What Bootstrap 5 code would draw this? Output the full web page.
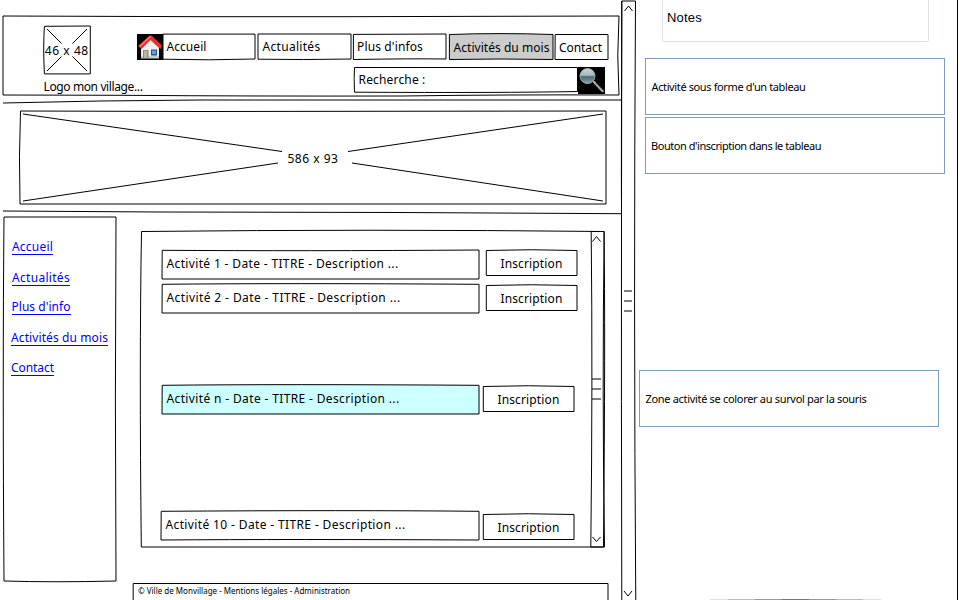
<!DOCTYPE html>
<html lang="fr">
<head>
<meta charset="utf-8">
<meta name="viewport" content="width=device-width, initial-scale=1">
<title>Mon village - Activités du mois</title>
<link href="https://cdn.jsdelivr.net/npm/bootstrap@5.3.0/dist/css/bootstrap.min.css" rel="stylesheet">
<style>
body{width:960px;height:600px;overflow:hidden;background:#fff;color:#000;font:12px/16px "Comic Sans MS","Noto Sans",sans-serif}
.site{width:621px;height:600px;flex:none}
.site>*{flex:none}
.box{position:relative;flex:none;display:flex;align-items:center}
.box>span,.box>a{position:relative;white-space:nowrap}
/* hand-drawn outline laid over its box */
.ink{position:absolute;left:0;top:0;width:100%;height:100%;overflow:visible;fill:none;stroke:#000;stroke-width:1;pointer-events:none}
.ink path{vector-effect:non-scaling-stroke}
[data-w]{white-space:nowrap;display:inline-block}
.site-head{width:616px;height:79px;margin:15.5px 0 0 2.5px;position:relative}
.logo{width:46.5px;height:48px}
.logo-col{margin:10.5px 0 0 41px;width:93.5px}
.menu{height:27px;margin-top:18px}
.menu .box{height:25.5px}
.menu .box>span{padding-top:2px}
.picto{width:26px;height:26px;flex:none;display:block}
.search-line{height:27px;margin:6px 0 0 216.5px}
.search-box{width:224px;height:25px}
.rule-line{height:5px;position:relative;width:621px}
.banner{width:586px;height:93px;margin-left:20px}
.aside-menu{width:112px;height:364px;position:relative;margin-left:3.5px;padding:22.5px 0 0 8px;flex:none}
.aside-menu a{color:#00f;text-decoration:none;border-bottom:1px solid #00f;line-height:15px;height:16px;display:block;width:max-content}
.panel{width:463px;height:316px;margin:14.5px 0 0 25.5px;position:relative}
.panel-list{width:449.5px;padding:18.5px 0 0 20.5px}
.entry{width:317px;height:29px;padding-left:5px}
.ins{width:91px;height:25.5px;justify-content:center}
.ins>span{padding-top:3px}
.hot{background:#cff}
.bar-in{width:13.5px;position:relative}
.foot{width:475px;height:30px;margin:2.5px 0 0 133px;position:relative;font-size:8px;line-height:12px;padding:2px 0 0 5px}
.bar-out{width:15px;height:600px;flex:none;position:relative}
.notes{width:322px;flex:none;border-right:1px solid #000;height:600px;position:relative}
.note-title{width:267px;height:42px;margin-left:26px;border:1px solid #dfe2ea;border-top:0;border-radius:0 0 2px 2px;font:13px/16px "Liberation Sans",Arial,sans-serif;padding:10px 0 0 4px}
.note{width:300px;height:57px;border:1px solid #7f9db9;padding:20px 0 0 5.5px;font:11px/16px Tahoma,"Noto Sans",sans-serif}
.shade{width:171px;height:1px;position:absolute;left:74px;bottom:0;background:linear-gradient(90deg,#e0e0e0 0 18px,#bbb 18px 45px,#999 45px 72px,#777 72px 99px,#999 99px 126px,#bbb 126px 153px,#e0e0e0 153px)}
</style>
<script src="https://cdn.jsdelivr.net/npm/bootstrap@5.3.0/dist/js/bootstrap.bundle.min.js"></script>
</head>
<body class="d-flex">
<main class="site d-flex flex-column">
  <header class="site-head d-flex">
    <svg class="ink" preserveAspectRatio="none" viewBox="0 0 616 79"><path d="M0 0L200 .7L340 .7L616 0Q613.5 40 616 79Q500 78.5 400 80Q250 80.3 120 79.3L0 79Z"/></svg>
    <div class="logo-col">
      <div class="box logo justify-content-center">
        <svg class="ink" viewBox="0 0 46.5 48"><path d="M.4 .3L46.3 0V47.9H.4Q-1 22 .4 .3M3 3L17.500 17.500M43 3L28.500 17.500M3 45L17.500 30.500M43 45L28.500 30.500"/></svg>
        <span data-w="44" style="padding-top:2px">46 x 48</span>
      </div>
      <div style="padding-top:1px"><span data-w="99" class="mt-1">Logo mon village...</span></div>
    </div>
    <div>
      <nav class="menu d-flex">
        <svg class="picto" viewBox="0 0 26 26"><path fill="#000" d="M0 0h26v26H0z"/><path fill="#eee" d="M4 12L13 5l9 7v12H4z"/><path fill="#ccc" d="M4 22h18v2.500H4z"/><path fill="#918d80" d="M6 16h5.500v8H6z"/><path fill="#bbb7a5" d="M7 17h3v7H7z"/><path fill="#244f9b" d="M14 15.500h6v6h-6z"/><path fill="#6b9ce0" d="M15 16.500h4v3.500h-4z"/><path fill="#ec2d30" d="M12.500 1.500h2L25 11.500l-1.500 3.500-2-1.500-8-7.500-9 9L1 12z"/><path fill="#ff7775" d="M13 2L2 12l1 1L13.500 3.500z"/></svg>
        <div class="box" style="width:92px;padding-left:3.5px"><svg class="ink" preserveAspectRatio="none" viewBox="0 0 92 25.5"><path d="M0 .1H92V25Q45 26.500 0 25.200Z"/></svg><span data-w="40">Accueil</span></div>
        <div class="box" style="width:93px;margin-left:3px;padding-left:4.5px"><svg class="ink" preserveAspectRatio="none" viewBox="0 0 93 25.5"><path d="M0 0H93V25Q45 26 0 25.200Z"/></svg><span data-w="58">Actualités</span></div>
        <div class="box" style="width:93px;margin-left:2px;padding-left:4px"><svg class="ink" preserveAspectRatio="none" viewBox="0 0 93 25.5"><path d="M.4 .4L93 0V25Q60 24.500 .4 25.500Z"/></svg><span data-w="66">Plus d'infos</span></div>
        <div class="box" style="width:104px;margin-left:3px;padding-left:4.500px;top:.5px"><svg class="ink" preserveAspectRatio="none" viewBox="0 0 104 25.5"><path fill="#ccc" d="M.4 .5Q50 -1.300 104 .5V25.500Q50 24.500 .4 25.500Z"/></svg><span data-w="96">Activités du mois</span></div>
        <div class="box" style="width:53px;margin-left:2px;padding-left:4px;top:.5px"><svg class="ink" preserveAspectRatio="none" viewBox="0 0 53 25.5"><path d="M.2 .5H53V25.500H0Z"/></svg><span data-w="43">Contact</span></div>
      </nav>
      <div class="search-line d-flex">
        <div class="box search-box" style="padding-left:5px"><svg class="ink" preserveAspectRatio="none" viewBox="0 0 224 25"><path d="M.5 .5H223.500V24.500Q150 26 .5 25.200Q-.2 10 .5 .5"/></svg><span data-w="67" style="padding-top:2px">Recherche :</span></div>
        <svg class="picto" style="width:27px;height:27px" viewBox="0 0 27 27"><defs><linearGradient id="lens" x2="0" y2="1"><stop stop-color="#cad9dc"/><stop offset=".45" stop-color="#a5b9bf"/><stop offset=".55" stop-color="#4d6872"/><stop offset="1" stop-color="#86a5ad"/></linearGradient></defs><path fill="#000" d="M0 0h27v27H0z"/><path stroke="#aaa" stroke-width="2.500" stroke-linecap="round" d="M16 15L24.500 24"/><path stroke="#555" stroke-width="1" d="M18 16L25 23"/><circle cx="9.500" cy="9" r="7.500" fill="url(#lens)" stroke="#9eabad"/></svg>
      </div>
    </div>
  </header>

  <div class="rule-line" style="margin-top:4.5px"><svg class="ink" viewBox="0 0 621 5"><path d="M3 4L100 2L200 1L621 1"/></svg></div>

  <div class="box banner justify-content-center" style="margin-top:7px">
    <svg class="ink" viewBox="0 0 586 93"><path d="M.5 0L180 .5L586 0V93H0Q-1.300 45 .5 0M3 3L262 40.500M3 90L258 52M583 3L328 40.500M583 90L332 52"/></svg>
    <span data-w="51" style="padding-top:2px">586 x 93</span>
  </div>

  <div class="rule-line" style="margin-top:6px"><svg class="ink" viewBox="0 0 621 5"><path d="M3 1L160 2L400 2.500L621 3.700"/></svg></div>

  <div class="d-flex" style="margin-top:1.5px">
    <aside class="aside-menu">
      <svg class="ink" viewBox="0 0 112 364"><path d="M0 0H112Q110.800 180 112 364Q50 365.500 0 364Q-1.500 160 0 0Z"/></svg>
      <a href="#" data-w="41" style="margin-left:.5px">Accueil</a>
      <a href="#" data-w="58" style="margin:15px 0 0 .5px">Actualités</a>
      <a href="#" data-w="59" style="margin-top:13px">Plus d'info</a>
      <a href="#" data-w="97" style="margin:15px 0 0 -.5px">Activités du mois</a>
      <a href="#" data-w="43" style="margin:14px 0 0 -.5px">Contact</a>
    </aside>

    <section class="panel d-flex">
      <svg class="ink" viewBox="0 0 463 316"><path d="M.5 .5Q230 -2 463 .5Q464.500 100 462.500 316H.3Q-1.800 130 .5 .5"/></svg>
      <div class="panel-list">
        <div class="d-flex">
          <div class="box entry"><svg class="ink" viewBox="0 0 317 29"><path d="M.2 .3Q140 1.200 317 0V29H0Z"/></svg><span data-w="232">Activité 1 - Date - TITRE - Description ...</span></div>
          <div class="box ins" style="margin-left:7.5px;top:.5px"><svg class="ink" viewBox="0 0 91 25.5"><path d="M.3 .5Q45 -1 91 .5V25.500H.3Z"/></svg><span data-w="62">Inscription</span></div>
        </div>
        <div class="d-flex" style="margin-top:5px">
          <div class="box entry"><svg class="ink" viewBox="0 0 317 29"><path d="M.2 .3Q120 -1 317 .3V29H0Z"/></svg><span data-w="234">Activité 2 - Date - TITRE - Description ...</span></div>
          <div class="box ins" style="margin-left:7.5px;top:1.5px"><svg class="ink" viewBox="0 0 91 25.5"><path d="M.3 .5Q45 -1 91 .5V25.500H.3Z"/></svg><span data-w="62">Inscription</span></div>
        </div>
        <div class="d-flex" style="margin-top:72px">
          <div class="box entry hot"><svg class="ink" viewBox="0 0 317 29"><path d="M.2 .3Q120 -1 317 .3V29H0Z"/></svg><span data-w="233">Activité n - Date - TITRE - Description ...</span></div>
          <div class="box ins" style="margin-left:4.5px;top:1.5px"><svg class="ink" viewBox="0 0 91 25.5"><path d="M.3 .5Q45 -1 91 .5V25.500H.3Z"/></svg><span data-w="62">Inscription</span></div>
        </div>
        <div class="d-flex" style="margin:97px 0 0 -1px">
          <div class="box entry" style="width:318px"><svg class="ink" viewBox="0 0 318 29"><path d="M.2 .3Q190 -1 318 .3V29Q130 28 0 29Z"/></svg><span data-w="240">Activité 10 - Date - TITRE - Description ...</span></div>
          <div class="box ins" style="margin-left:4.5px;top:3.5px"><svg class="ink" viewBox="0 0 91 25.5"><path d="M.3 .5Q45 -1 91 .5V25.500H.3Z"/></svg><span data-w="62">Inscription</span></div>
        </div>
      </div>
      <div class="bar-in"><svg class="ink" viewBox="0 0 13.5 316"><path d="M.2 .5H13.200Q11 160 13.500 316H-.2Q1.800 150 .2 .5M1.500 10.500L5.500 5.500L9.500 10.500M1.500 306L5.500 310.500L9.500 306M1 148H10M1 158H10M1 168H10"/></svg></div>
    </section>
  </div>

  <footer class="foot"><svg class="ink" viewBox="0 0 475 30"><path d="M.2 .5H475V30H.2Z"/></svg><span data-w="212">© Ville de Monvillage - Mentions légales - Administration</span></footer>
</main>

<div class="bar-out"><svg class="ink" viewBox="0 0 15 600"><path d="M.8 1H14.500Q12.500 300 14.800 606H.8Q.2 400 .5 200ZM.8 1Q.2 200 .5 200M3.500 11L7.500 6L11.500 11M3 591L7 596L11 591M3 291H11M3 301H11M3 311H11"/></svg></div>

<aside class="notes">
  <div class="note-title"><span data-w="35">Notes</span></div>
  <div class="note" style="margin:16px 0 0 9px"><span data-w="154">Activité sous forme d'un tableau</span></div>
  <div class="note" style="margin:2px 0 0 9px;padding-left:5px"><span data-w="170">Bouton d'inscription dans le tableau</span></div>
  <div class="note" style="margin:196px 0 0 3px"><span data-w="221">Zone activité se colorer au survol par la souris</span></div>
  <div class="shade"></div>
</aside>
<script>
// Spread each label over its declared width.
document.querySelectorAll('[data-w]').forEach(function (el) {
  var target = +el.dataset.w, n = el.textContent.length;
  el.style.letterSpacing = ((target - el.getBoundingClientRect().width) / n).toFixed(3) + 'px';
});
</script>
</body>
</html>
